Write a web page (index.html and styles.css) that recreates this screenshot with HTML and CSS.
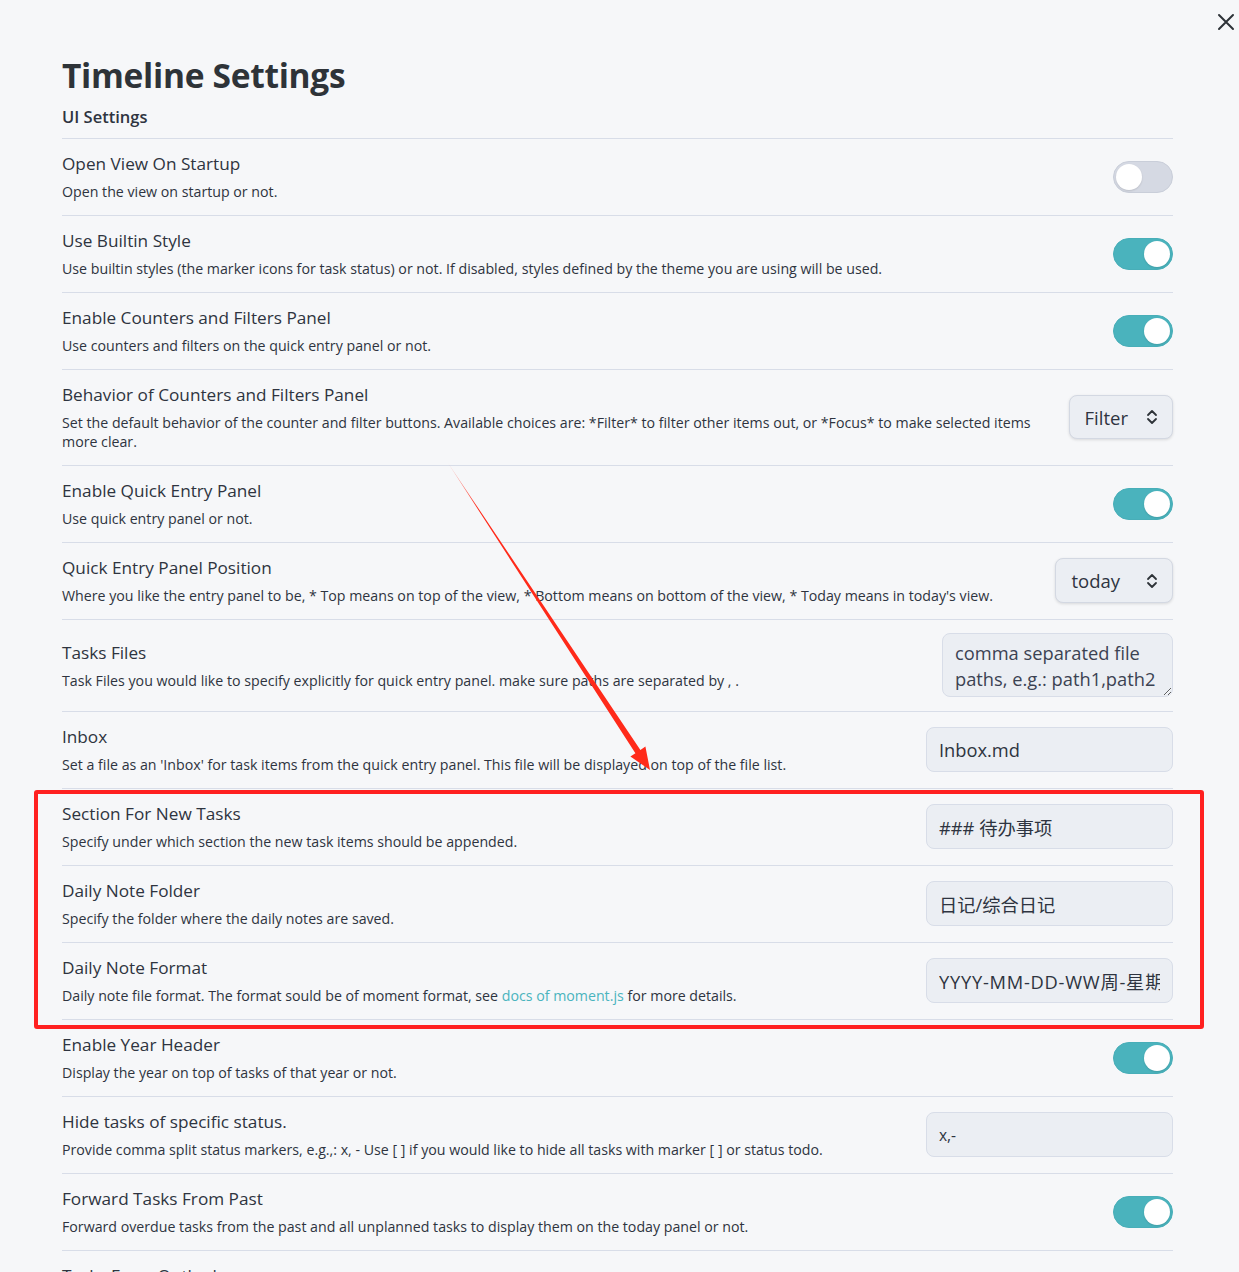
FILE: index.html
```html
<!DOCTYPE html>
<html lang="en">
<head>
<meta charset="utf-8">
<title>Timeline Settings</title>
<link rel="stylesheet" href="styles.css">
</head>
<body>
<div class="modal">
  <button class="close" aria-label="Close">
    <svg width="20" height="20" viewBox="0 0 20 20"><path d="M3 3 L17 17 M17 3 L3 17" stroke="#2e3338" stroke-width="2" stroke-linecap="round" fill="none"/></svg>
  </button>
  <main class="settings">
    <h1 class="title">Timeline Settings</h1>
    <h3 class="section">UI Settings</h3>

    <div class="item">
      <div class="info"><div class="name">Open View On Startup</div><div class="desc">Open the view on startup or not.</div></div>
      <div class="control"><div class="toggle"></div></div>
    </div>
    <div class="item">
      <div class="info"><div class="name">Use Builtin Style</div><div class="desc">Use builtin styles (the marker icons for task status) or not. If disabled, styles defined by the theme you are using will be used.</div></div>
      <div class="control"><div class="toggle on"></div></div>
    </div>
    <div class="item">
      <div class="info"><div class="name">Enable Counters and Filters Panel</div><div class="desc">Use counters and filters on the quick entry panel or not.</div></div>
      <div class="control"><div class="toggle on"></div></div>
    </div>
    <div class="item">
      <div class="info"><div class="name">Behavior of Counters and Filters Panel</div><div class="desc">Set the default behavior of the counter and filter buttons. Available choices are: *Filter* to filter other items out, or *Focus* to make selected items more clear.</div></div>
      <div class="control"><div class="select">Filter<svg class="chev" width="12" height="18" viewBox="0 0 12 18"><path d="M2 7 L6 3 L10 7 M2 11 L6 15 L10 11" stroke="#2e3338" stroke-width="1.8" fill="none" stroke-linecap="round" stroke-linejoin="round"/></svg></div></div>
    </div>
    <div class="item">
      <div class="info"><div class="name">Enable Quick Entry Panel</div><div class="desc">Use quick entry panel or not.</div></div>
      <div class="control"><div class="toggle on"></div></div>
    </div>
    <div class="item">
      <div class="info"><div class="name">Quick Entry Panel Position</div><div class="desc">Where you like the entry panel to be, * Top means on top of the view, * Bottom means on bottom of the view, * Today means in today's view.</div></div>
      <div class="control"><div class="select today">today<svg class="chev" width="12" height="18" viewBox="0 0 12 18"><path d="M2 7 L6 3 L10 7 M2 11 L6 15 L10 11" stroke="#2e3338" stroke-width="1.8" fill="none" stroke-linecap="round" stroke-linejoin="round"/></svg></div></div>
    </div>
    <div class="item">
      <div class="info"><div class="name">Tasks Files</div><div class="desc">Task Files you would like to specify explicitly for quick entry panel. make sure paths are separated by , .</div></div>
      <div class="control"><textarea class="textarea" placeholder="comma separated file paths, e.g.: path1,path2"></textarea></div>
    </div>
    <div class="item">
      <div class="info"><div class="name">Inbox</div><div class="desc">Set a file as an 'Inbox' for task items from the quick entry panel. This file will be displayed on top of the file list.</div></div>
      <div class="control"><input class="input" type="text" value="Inbox.md"></div>
    </div>
    <div class="item">
      <div class="info"><div class="name">Section For New Tasks</div><div class="desc">Specify under which section the new task items should be appended.</div></div>
      <div class="control"><input class="input" type="text" value="### 待办事项"></div>
    </div>
    <div class="item">
      <div class="info"><div class="name">Daily Note Folder</div><div class="desc">Specify the folder where the daily notes are saved.</div></div>
      <div class="control"><input class="input" type="text" value="日记/综合日记"></div>
    </div>
    <div class="item">
      <div class="info"><div class="name">Daily Note Format</div><div class="desc">Daily note file format. The format sould be of moment format, see <a class="link" href="#">docs of moment.js</a> for more details.</div></div>
      <div class="control"><input class="input wide" type="text" value="YYYY-MM-DD-WW周-星期dd"></div>
    </div>
    <div class="item">
      <div class="info"><div class="name">Enable Year Header</div><div class="desc">Display the year on top of tasks of that year or not.</div></div>
      <div class="control"><div class="toggle on"></div></div>
    </div>
    <div class="item">
      <div class="info"><div class="name">Hide tasks of specific status.</div><div class="desc">Provide comma split status markers, e.g.,: x, - Use [ ] if you would like to hide all tasks with marker [ ] or status todo.</div></div>
      <div class="control"><input class="input small" type="text" value="x,-"></div>
    </div>
    <div class="item">
      <div class="info"><div class="name">Forward Tasks From Past</div><div class="desc">Forward overdue tasks from the past and all unplanned tasks to display them on the today panel or not.</div></div>
      <div class="control"><div class="toggle on"></div></div>
    </div>
    <div class="item">
      <div class="info"><div class="name">Tasks From Outlook</div><div class="desc">Show tasks from outlook in the timeline or not.</div></div>
      <div class="control"><div class="toggle on"></div></div>
    </div>
  </main>

  <div class="highlight"></div>
  <svg class="arrow" width="1239" height="1272" viewBox="0 0 1239 1272">
    <defs>
      <linearGradient id="fade" x1="448" y1="463" x2="650" y2="770" gradientUnits="userSpaceOnUse">
        <stop offset="0" stop-color="#ff2a1a" stop-opacity="0.3"/>
        <stop offset="0.15" stop-color="#ff2a1a"/>
        <stop offset="1" stop-color="#ff2a1a"/>
      </linearGradient>
    </defs>
    <polygon points="448,463 640.4,749.9 645.4,746.6 650,770 630.4,756.5 635.4,753.3" fill="url(#fade)"/>
  </svg>
</div>
</body>
</html>
```

FILE: styles.css
```css
* { box-sizing: border-box; }
html, body {
  margin: 0;
  padding: 0;
  background: #f6f7f9;
  height: 1272px;
  overflow: hidden;
}
body {
  font-family: "Open Sans", "Noto Sans", "Noto Sans CJK SC", sans-serif;
  color: #2e3440;
}
.modal {
  position: relative;
  width: 1239px;
  height: 1272px;
}
.close {
  position: absolute;
  top: 12px;
  right: 3px;
  width: 20px;
  height: 20px;
  padding: 0;
  border: none;
  background: none;
}
.settings {
  padding: 51px 66px 0 62px;
}
.title {
  margin: 0;
  font-size: 33.5px;
  line-height: 48px;
  font-weight: 700;
  letter-spacing: -0.3px;
  color: #2e3338;
}
.section {
  margin: 6px 0 0;
  font-size: 16.5px;
  line-height: 24px;
  font-weight: 600;
  padding-bottom: 9px;
  border-bottom: 1px solid #d8dde8;
}
.item {
  display: flex;
  align-items: center;
  padding: 13px 0 14px;
  border-bottom: 1px solid #d8dde8;
}
.info {
  flex: 1 1 auto;
  margin-right: 30px;
}
.name {
  font-size: 17.2px;
  line-height: 24px;
  font-weight: 400;
}
.desc {
  margin-top: 6px;
  font-size: 14.2px;
  line-height: 19px;
}
.link {
  color: #4ab4be;
  text-decoration: none;
}
.control {
  flex: none;
  display: flex;
  justify-content: flex-end;
}
.toggle {
  position: relative;
  width: 60px;
  height: 32px;
  border-radius: 16px;
  background: #d5d9e3;
  border: 1px solid #c9ced9;
}
.toggle::after {
  content: "";
  position: absolute;
  top: 2px;
  left: 2px;
  width: 26px;
  height: 26px;
  border-radius: 50%;
  background: #fff;
  box-shadow: 0 1px 2px rgba(0,0,0,0.12);
}
.toggle.on {
  background: #4ab3bd;
  border-color: #48aeb8;
}
.toggle.on::after {
  left: 30px;
}
.select {
  display: flex;
  align-items: center;
  gap: 18px;
  height: 44px;
  padding: 0 14px 0 15px;
  font-size: 18.5px;
  background: #ebeef3;
  border: 1px solid #d3d8e2;
  border-radius: 8px;
  box-shadow: 0 1px 3px rgba(0,0,0,0.12);
  color: #2e3440;
}
.select.today { gap: 26px; height: 45px; }
.textarea {
  width: 231px;
  height: 64px;
  padding: 6px 12px;
  font-family: inherit;
  font-size: 18.3px;
  line-height: 26px;
  color: #2e3440;
  background: #ebeef3;
  border: 1px solid #d8dde8;
  border-radius: 8px;
  resize: both;
  overflow: hidden;
}
.textarea::placeholder { color: #3b4252; opacity: 1; }
.input {
  width: 247px;
  height: 45px;
  padding: 0 12px;
  font-family: inherit;
  font-size: 18.3px;
  color: #2e3440;
  background: #ebeef3;
  border: 1px solid #d8dde8;
  border-radius: 8px;
  outline: none;
}
.input.wide { letter-spacing: 0.75px; }
.input.small { font-size: 15.5px; }
.highlight {
  position: absolute;
  left: 34px;
  top: 790px;
  width: 1170px;
  height: 239px;
  border: 4px solid #ff2020;
  border-radius: 3px;
  pointer-events: none;
}
.arrow {
  position: absolute;
  left: 0;
  top: 0;
  pointer-events: none;
}
```
